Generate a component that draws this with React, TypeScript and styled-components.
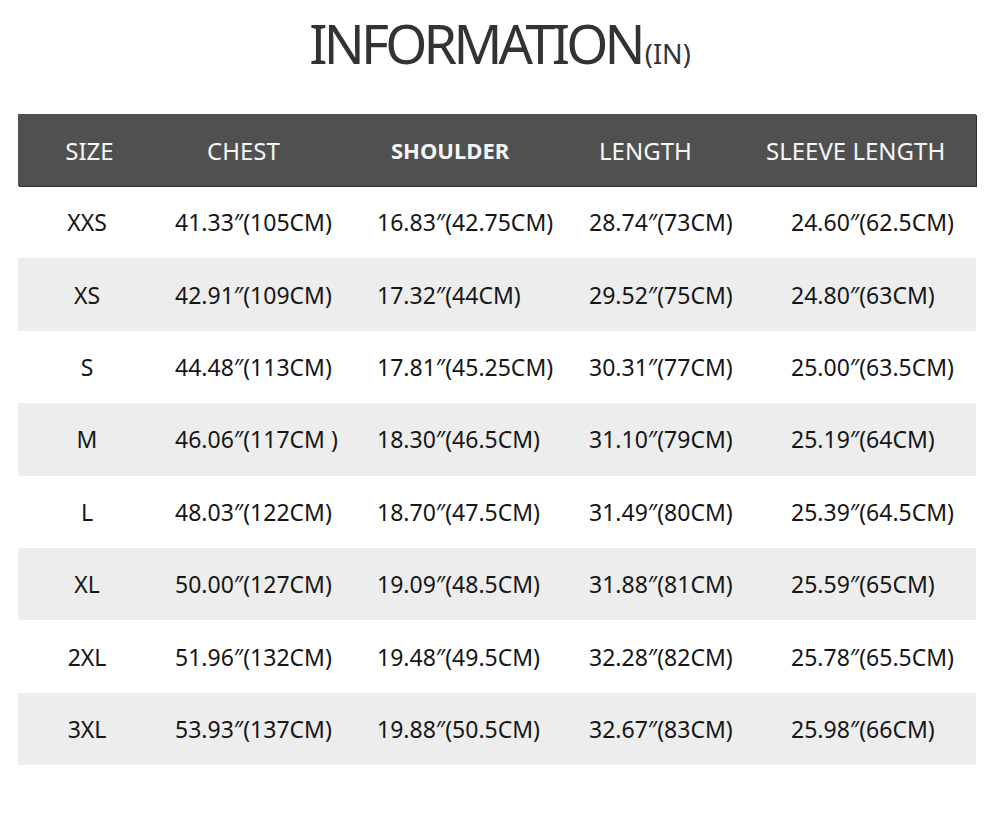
import styled, { createGlobalStyle } from "styled-components";

const GlobalStyle = createGlobalStyle`
  html, body {
    margin: 0;
    padding: 0;
    background: #ffffff;
    font-family: "Noto Sans", "Noto Sans CJK SC", sans-serif;
  }
`;

type Col = { headPad: number; dataPad: number; center?: boolean };

const cols: Col[] = [
  { headPad: 0, dataPad: 0, center: true },
  { headPad: 42, dataPad: 10 },
  { headPad: 24, dataPad: 10 },
  { headPad: 20, dataPad: 10 },
  { headPad: 6, dataPad: 31 },
];

const headers = ["SIZE", "CHEST", "SHOULDER", "LENGTH", "SLEEVE LENGTH"];

const rows = [
  ["XXS", "41.33\u2033(105CM)", "16.83\u2033(42.75CM)", "28.74\u2033(73CM)", "24.60\u2033(62.5CM)"],
  ["XS", "42.91\u2033(109CM)", "17.32\u2033(44CM)", "29.52\u2033(75CM)", "24.80\u2033(63CM)"],
  ["S", "44.48\u2033(113CM)", "17.81\u2033(45.25CM)", "30.31\u2033(77CM)", "25.00\u2033(63.5CM)"],
  ["M", "46.06\u2033(117CM )", "18.30\u2033(46.5CM)", "31.10\u2033(79CM)", "25.19\u2033(64CM)"],
  ["L", "48.03\u2033(122CM)", "18.70\u2033(47.5CM)", "31.49\u2033(80CM)", "25.39\u2033(64.5CM)"],
  ["XL", "50.00\u2033(127CM)", "19.09\u2033(48.5CM)", "31.88\u2033(81CM)", "25.59\u2033(65CM)"],
  ["2XL", "51.96\u2033(132CM)", "19.48\u2033(49.5CM)", "32.28\u2033(82CM)", "25.78\u2033(65.5CM)"],
  ["3XL", "53.93\u2033(137CM)", "19.88\u2033(50.5CM)", "32.67\u2033(83CM)", "25.98\u2033(66CM)"],
];

export default function App() {
  return (
    <>
      <GlobalStyle />
      <Page>
        <Title>
          INFORMATION<Unit>(IN)</Unit>
        </Title>
        <Table>
          <HeadRow>
            {headers.map((h, i) => (
              <HeadCell
                key={h}
                $pad={cols[i].headPad}
                $center={cols[i].center}
                $bold={h === "SHOULDER"}
              >
                {h}
              </HeadCell>
            ))}
          </HeadRow>
          {rows.map((r, ri) => (
            <Row key={r[0]} $shaded={ri % 2 === 1}>
              {r.map((v, i) => (
                <Cell key={i} $pad={cols[i].dataPad} $center={cols[i].center}>
                  {v}
                </Cell>
              ))}
            </Row>
          ))}
        </Table>
      </Page>
    </>
  );
}

const Page = styled.div`
  width: 1000px;
  height: 819px;
  background: #ffffff;
  overflow: hidden;
`;

const Title = styled.h1`
  margin: 0;
  padding-top: 13px;
  height: 100px;
  box-sizing: border-box;
  text-align: center;
  font-weight: 400;
  font-size: 54px;
  letter-spacing: -3.8px;
  color: #333333;
  line-height: 60px;
`;

const Unit = styled.span`
  font-size: 27px;
  letter-spacing: 0;
  margin-left: 3px;
`;

const Table = styled.div`
  margin: 14px 24px 0 18px;
  display: flex;
  flex-direction: column;
`;

const grid = `
  display: grid;
  grid-template-columns: 147px 202px 212px 181px 1fr;
  align-items: center;
`;

const HeadRow = styled.div`
  ${grid}
  height: 72px;
  background: #505050;
  box-shadow: 1px 1px 0 #2e2e2e;
  color: #f6f6f6;
  font-size: 24px;
`;

const HeadCell = styled.div<{ $pad: number; $center?: boolean; $bold?: boolean }>`
  padding-left: ${(p) => p.$pad}px;
  padding-right: ${(p) => (p.$center ? "4px" : "0")};
  text-align: ${(p) => (p.$center ? "center" : "left")};
  font-weight: ${(p) => (p.$bold ? 700 : 400)};
  font-size: ${(p) => (p.$bold ? "22px" : "24px")};
  white-space: nowrap;
`;

const Row = styled.div<{ $shaded: boolean }>`
  ${grid}
  height: 72.4px;
  background: ${(p) => (p.$shaded ? "#ededed" : "transparent")};
  color: #161616;
  font-size: 23px;
`;

const Cell = styled.div<{ $pad: number; $center?: boolean }>`
  padding-left: ${(p) => p.$pad}px;
  padding-right: ${(p) => (p.$center ? "9px" : "0")};
  text-align: ${(p) => (p.$center ? "center" : "left")};
  white-space: nowrap;
`;
